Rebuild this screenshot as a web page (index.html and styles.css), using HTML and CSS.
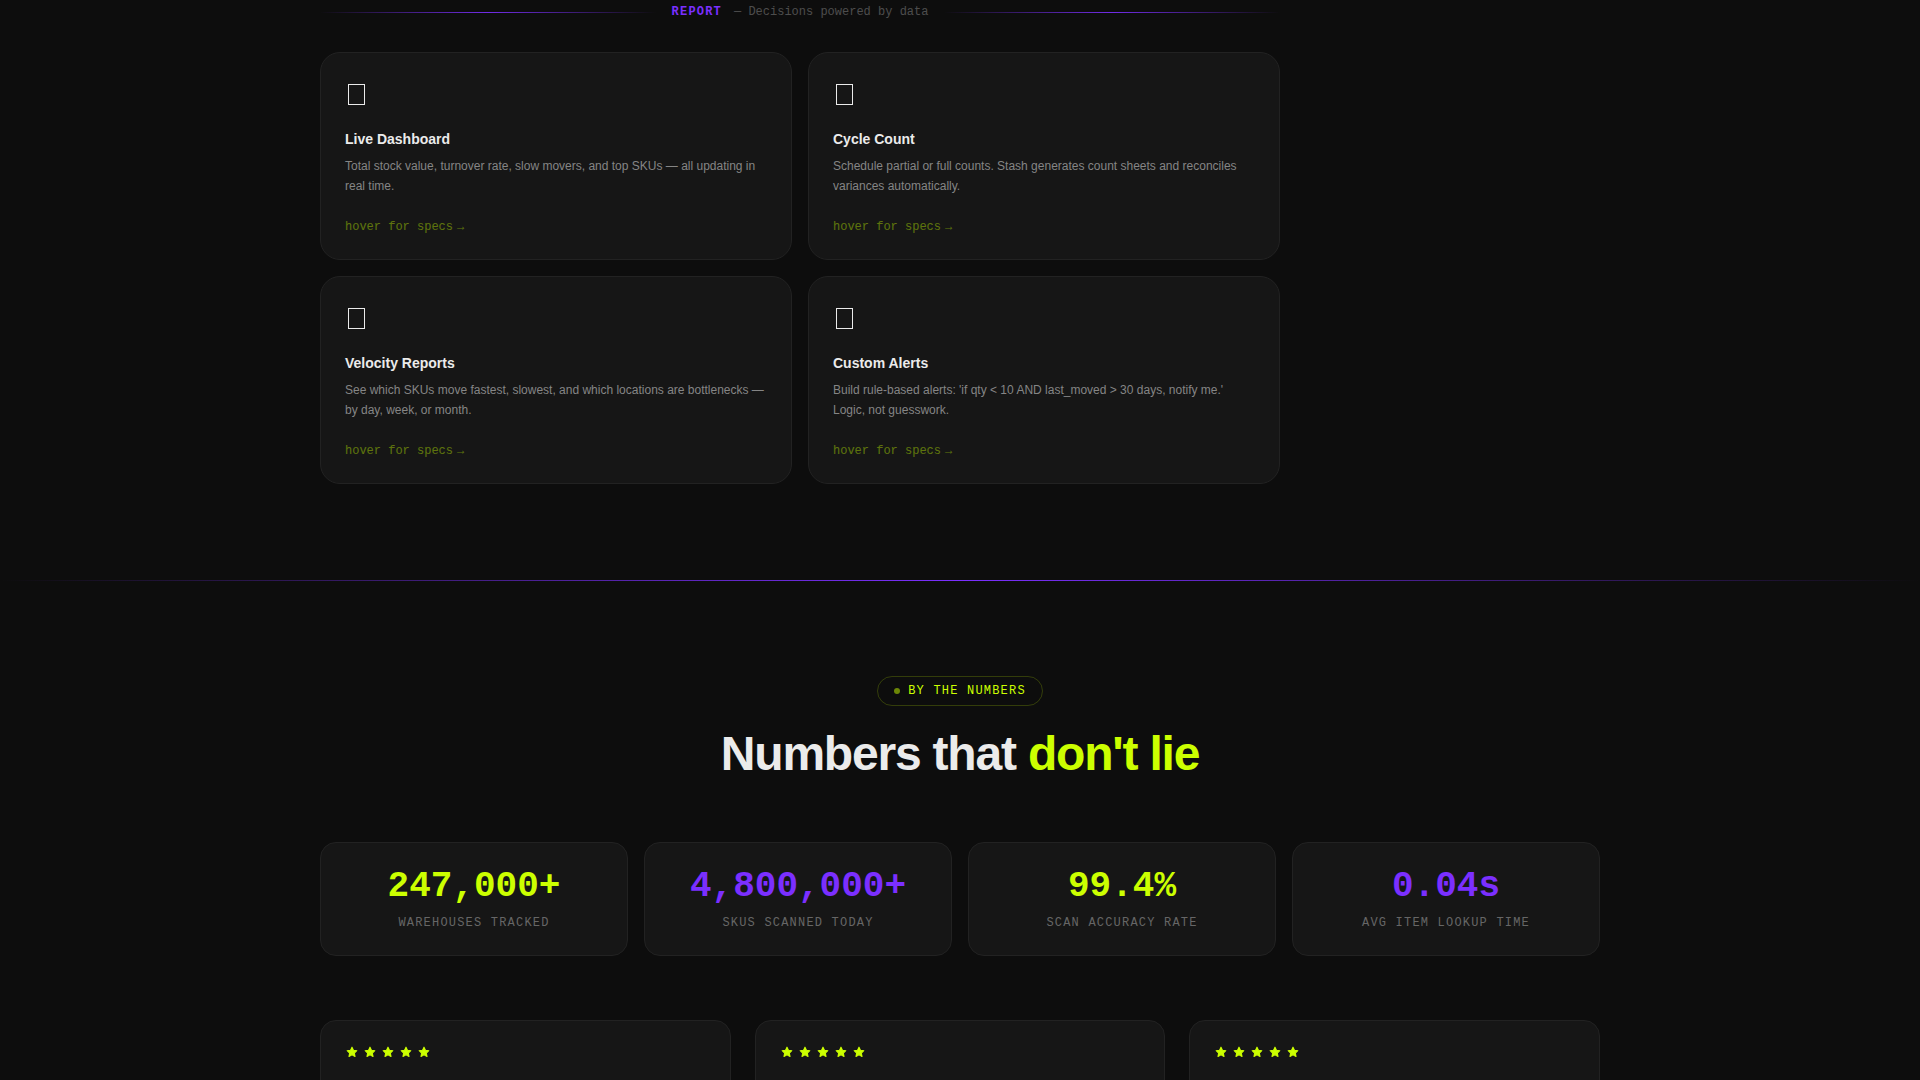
FILE: index.html
```html
<!DOCTYPE html>
<html lang="en">
<head>
    <meta charset="UTF-8">
    <meta name="viewport" content="width=device-width, initial-scale=1.0">
    <title>Stash</title>
    <link rel="stylesheet" href="styles.css">
</head>
<body>
    <svg class="sprite" aria-hidden="true">
        <symbol id="box" viewBox="0 0 17 21">
            <rect x="0.5" y="0.5" width="16" height="20" fill="none" stroke="currentColor"/>
        </symbol>
        <symbol id="star" viewBox="-1 -1 26 26">
            <path d="M12 3l2.7 5.8 6.3.8-4.6 4.4 1.2 6.4L12 17.300l-5.600 3.100 1.200-6.400L3 9.600l6.300-.8z" fill="currentColor" stroke="currentColor" stroke-width="2" stroke-linejoin="round"/>
        </symbol>
    </svg>

    <section class="features">
        <div class="container">
            <div class="feature-group">
                <div class="group-header">
                    <span class="group-line"></span>
                    <div class="group-label"><strong>REPORT</strong><span>— Decisions powered by data</span></div>
                    <span class="group-line"></span>
                </div>
                <div class="feature-grid">
                    <article class="feature-card">
                        <svg class="feature-icon"><use href="#box"/></svg>
                        <h3>Live Dashboard</h3>
                        <p>Total stock value, turnover rate, slow movers, and top SKUs — all updating in real time.</p>
                        <div class="feature-hint">hover for specs <span>→</span></div>
                    </article>
                    <article class="feature-card">
                        <svg class="feature-icon"><use href="#box"/></svg>
                        <h3>Cycle Count</h3>
                        <p>Schedule partial or full counts. Stash generates count sheets and reconciles variances automatically.</p>
                        <div class="feature-hint">hover for specs <span>→</span></div>
                    </article>
                    <article class="feature-card">
                        <svg class="feature-icon"><use href="#box"/></svg>
                        <h3>Velocity Reports</h3>
                        <p>See which SKUs move fastest, slowest, and which locations are bottlenecks — by day, week, or month.</p>
                        <div class="feature-hint">hover for specs <span>→</span></div>
                    </article>
                    <article class="feature-card">
                        <svg class="feature-icon"><use href="#box"/></svg>
                        <h3>Custom Alerts</h3>
                        <p>Build rule-based alerts: 'if qty &lt; 10 AND last_moved &gt; 30 days, notify me.' Logic, not guesswork.</p>
                        <div class="feature-hint">hover for specs <span>→</span></div>
                    </article>
                </div>
            </div>
        </div>
    </section>

    <div class="divider"></div>

    <section class="numbers">
        <div class="container">
            <div class="section-header">
                <div class="pill"><span class="pill-dot"></span>BY THE NUMBERS</div>
                <h2>Numbers that <span class="lime">don't lie</span></h2>
            </div>

            <div class="stats">
                <div class="stat">
                    <div class="stat-value lime">247,000+</div>
                    <div class="stat-label">WAREHOUSES TRACKED</div>
                </div>
                <div class="stat">
                    <div class="stat-value violet">4,800,000+</div>
                    <div class="stat-label">SKUS SCANNED TODAY</div>
                </div>
                <div class="stat">
                    <div class="stat-value lime">99.4%</div>
                    <div class="stat-label">SCAN ACCURACY RATE</div>
                </div>
                <div class="stat">
                    <div class="stat-value violet">0.04s</div>
                    <div class="stat-label">AVG ITEM LOOKUP TIME</div>
                </div>
            </div>

            <div class="reviews">
                <article class="review">
                    <div class="stars">
                        <svg><use href="#star"/></svg><svg><use href="#star"/></svg><svg><use href="#star"/></svg><svg><use href="#star"/></svg><svg><use href="#star"/></svg>
                    </div>
                </article>
                <article class="review">
                    <div class="stars">
                        <svg><use href="#star"/></svg><svg><use href="#star"/></svg><svg><use href="#star"/></svg><svg><use href="#star"/></svg><svg><use href="#star"/></svg>
                    </div>
                </article>
                <article class="review">
                    <div class="stars">
                        <svg><use href="#star"/></svg><svg><use href="#star"/></svg><svg><use href="#star"/></svg><svg><use href="#star"/></svg><svg><use href="#star"/></svg>
                    </div>
                </article>
            </div>
        </div>
    </section>
</body>
</html>
```
FILE: styles.css
```css
:root {
    --bg: #0d0d0d;
    --card: #161616;
    --border: #222222;
    --text: #ebebeb;
    --lime: #ccff00;
    --violet: #7b2fff;
    --mono: "Liberation Mono", "Courier New", monospace;
}
* {
    box-sizing: border-box;
    margin: 0;
    padding: 0;
}
body {
    background: var(--bg);
    color: var(--text);
    font-family: "Liberation Sans", Arial, sans-serif;
    font-size: 12px;
    line-height: 20px;
}
.sprite {
    display: none;
}
.container {
    max-width: 1280px;
    margin: 0 auto;
}
.lime {
    color: var(--lime);
}
.violet {
    color: var(--violet);
}

/* features */
.features {
    padding: 2px 24px 96px;
}
.feature-group {
    max-width: 960px;
}
.group-header {
    display: flex;
    align-items: center;
    gap: 16px;
    margin-bottom: 30px;
}
.group-line {
    flex: 1;
    height: 1px;
    background: linear-gradient(90deg, transparent, var(--violet), transparent);
    opacity: 0.9;
}
.group-label {
    display: flex;
    gap: 12px;
    font-family: var(--mono);
    color: #4d4d4d;
}
.group-label strong {
    color: var(--violet);
    letter-spacing: 0.1em;
}
.feature-grid {
    display: grid;
    grid-template-columns: repeat(2, 1fr);
    gap: 16px;
}
.feature-card {
    padding: 24px 24px 22px;
    background: var(--card);
    border: 1px solid var(--border);
    border-radius: 20px;
}
.feature-icon {
    display: block;
    width: 17px;
    height: 21px;
    margin: 7px 3px 24px;
}
.feature-card h3 {
    font-size: 14px;
    line-height: 20px;
    margin-bottom: 7px;
}
.feature-card p {
    color: #858585;
    margin-bottom: 21px;
}
.feature-hint {
    display: flex;
    gap: 4px;
    font-family: var(--mono);
    color: var(--lime);
    opacity: 0.4;
}

.divider {
    height: 1px;
    background: linear-gradient(90deg, transparent, var(--violet), transparent);
}

/* numbers */
.numbers {
    padding: 95px 24px 96px;
}
.section-header {
    text-align: center;
    margin-bottom: 60px;
}
.pill {
    display: inline-flex;
    align-items: center;
    gap: 8px;
    height: 30px;
    padding: 0 16px;
    border: 1px solid rgba(204, 255, 0, 0.2);
    border-radius: 15px;
    font-family: var(--mono);
    letter-spacing: 0.1em;
    color: var(--lime);
}
.pill-dot {
    width: 6px;
    height: 6px;
    border-radius: 50%;
    background: var(--lime);
    opacity: 0.5;
}
.section-header h2 {
    margin-top: 20px;
    font-size: 48px;
    line-height: 56px;
    letter-spacing: -0.025em;
}
.stats {
    display: grid;
    grid-template-columns: repeat(4, 1fr);
    gap: 16px;
    margin-bottom: 64px;
}
.stat {
    padding: 26px 24px 22px;
    text-align: center;
    font-family: var(--mono);
    background: var(--card);
    border: 1px solid var(--border);
    border-radius: 16px;
}
.stat-value {
    font-size: 36px;
    line-height: 36px;
    font-weight: 700;
    margin-bottom: 8px;
}
.stat-label {
    color: #666666;
    letter-spacing: 0.1em;
}
.reviews {
    display: grid;
    grid-template-columns: repeat(3, 1fr);
    gap: 24px;
}
.review {
    min-height: 220px;
    padding: 24px;
    background: var(--card);
    border: 1px solid var(--border);
    border-radius: 16px;
}
.stars {
    display: flex;
    gap: 4px;
    color: var(--lime);
}
.stars svg {
    width: 14px;
    height: 14px;
}
```
